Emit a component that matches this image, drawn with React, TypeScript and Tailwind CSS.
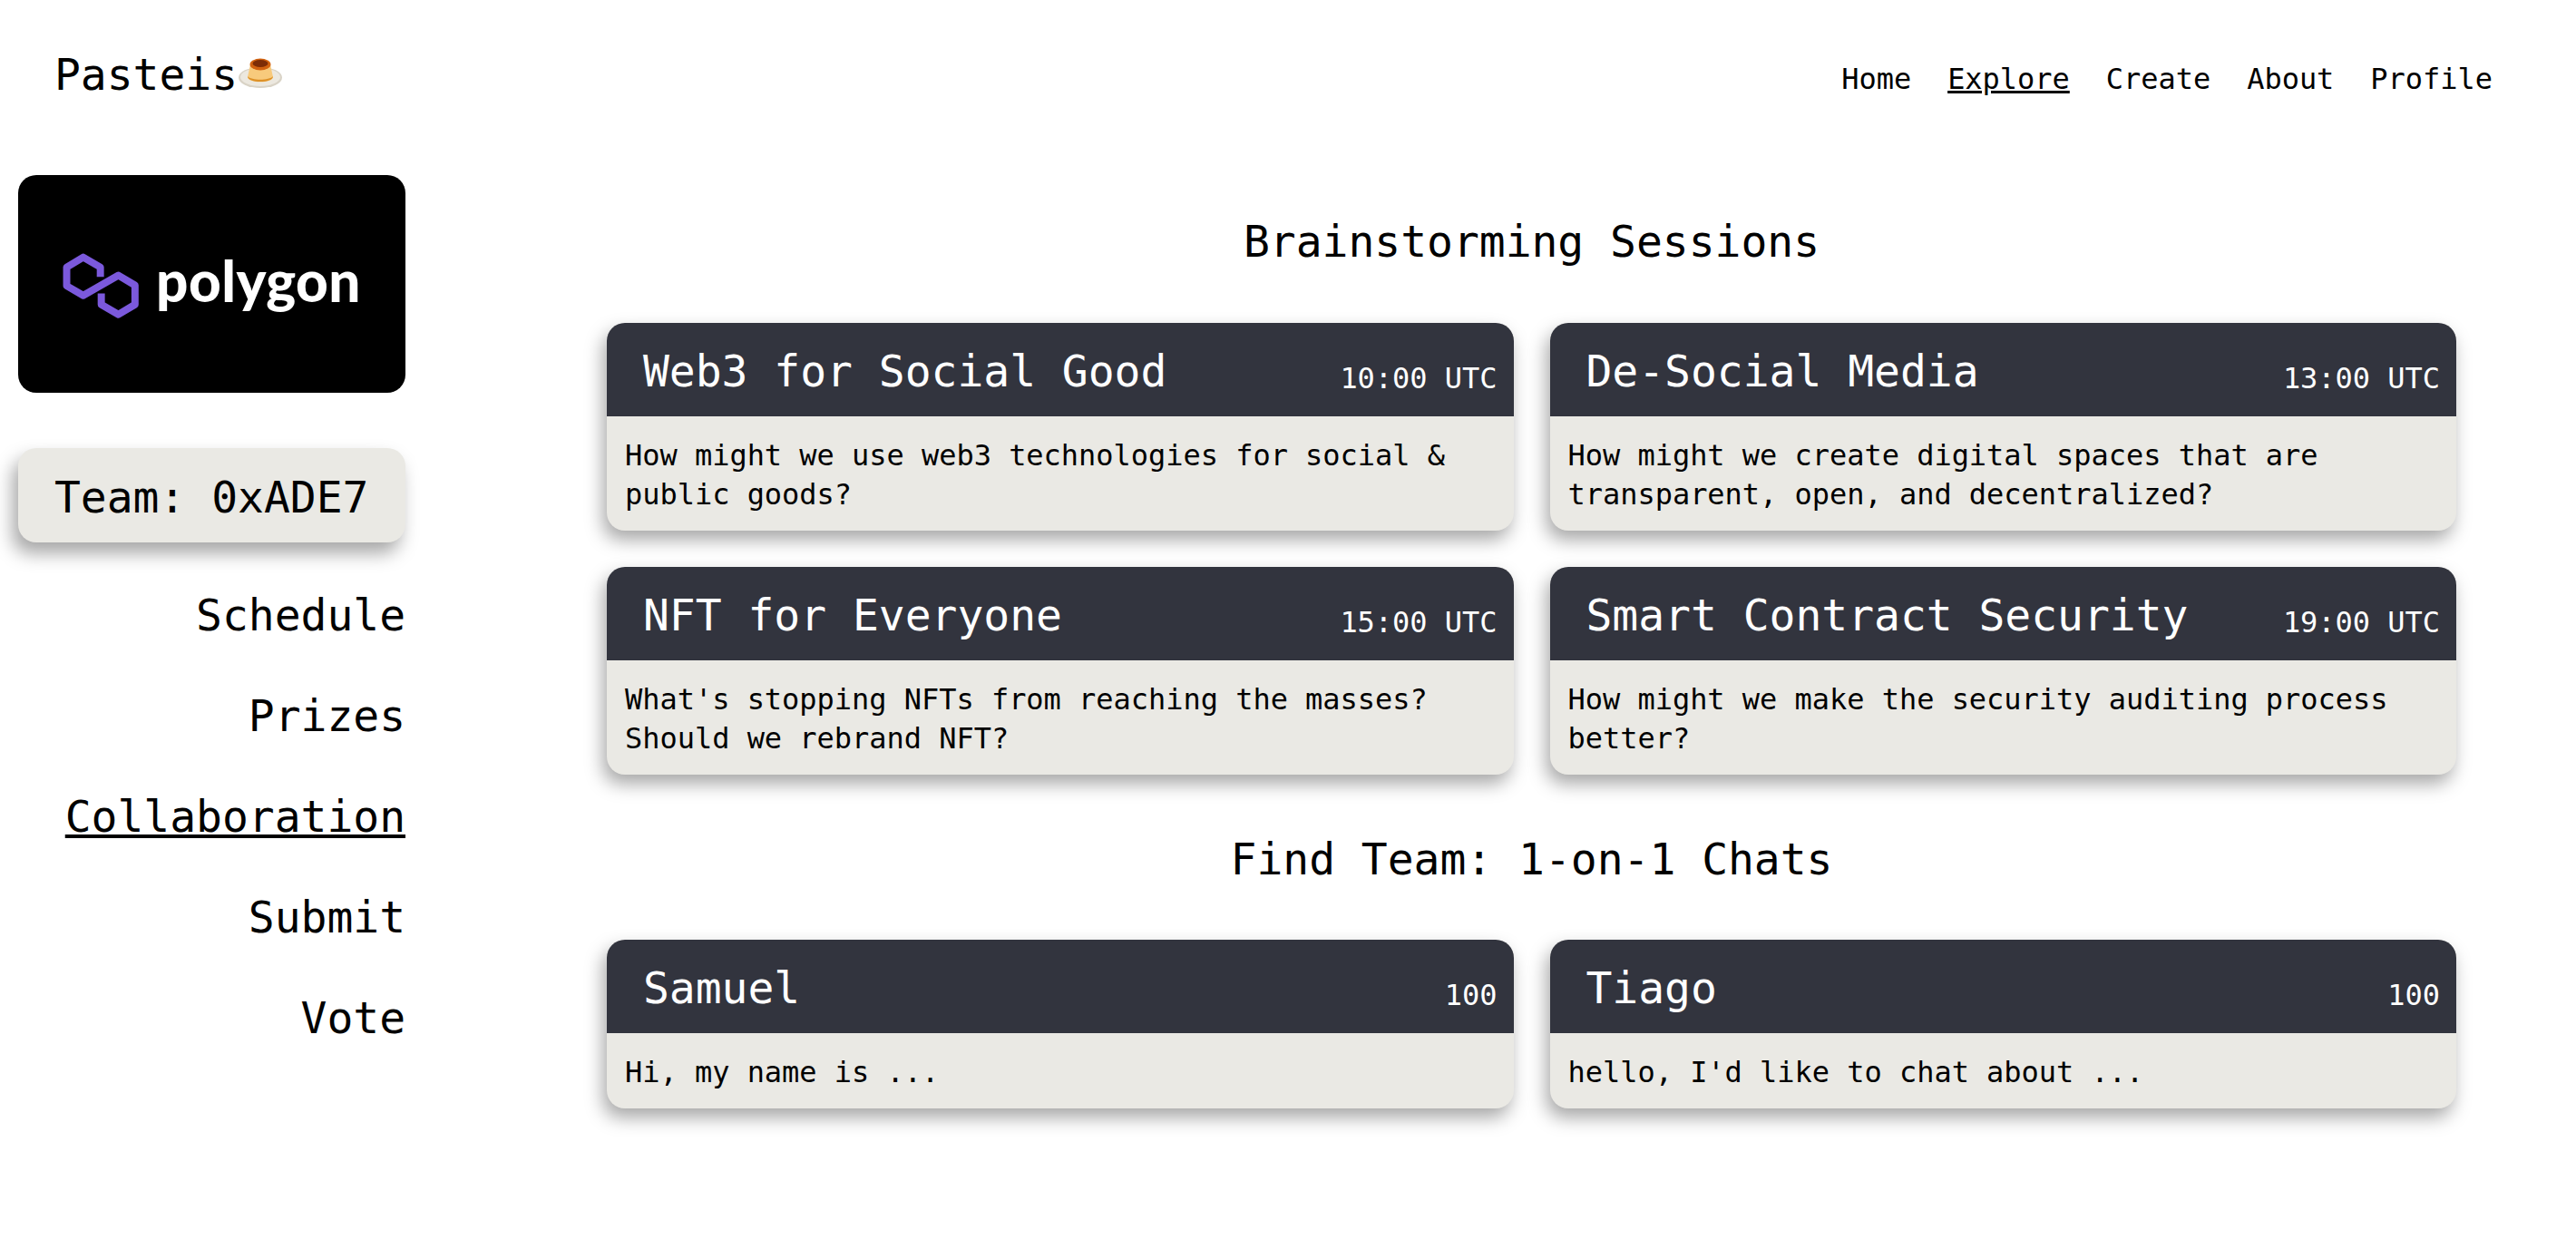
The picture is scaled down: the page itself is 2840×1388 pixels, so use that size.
const sessions = [
  { title: "Web3 for Social Good", meta: "10:00 UTC", body: "How might we use web3 technologies for social & public goods?" },
  { title: "De-Social Media", meta: "13:00 UTC", body: "How might we create digital spaces that are transparent, open, and decentralized?" },
  { title: "NFT for Everyone", meta: "15:00 UTC", body: "What's stopping NFTs from reaching the masses? Should we rebrand NFT?" },
  { title: "Smart Contract Security", meta: "19:00 UTC", body: "How might we make the security auditing process better?" },
];

const chats = [
  { title: "Samuel", meta: "100", body: "Hi, my name is ..." },
  { title: "Tiago", meta: "100", body: "hello, I'd like to chat about ..." },
];

const navLinks = ["Home", "Explore", "Create", "About", "Profile"];
const sideLinks = ["Schedule", "Prizes", "Collaboration", "Submit", "Vote"];

function Flan() {
  return (
    <svg width="48" height="33" viewBox="0 0 48 33" className="ml-[1px] mt-[18px] shrink-0">
      <ellipse cx="24" cy="21.5" rx="24" ry="11.5" fill="#d9d3c6" />
      <ellipse cx="24" cy="21" rx="22" ry="10" fill="#ece8df" />
      <path d="M13 7 L10 21 C10 28 38 28 38 21 L35 7 Z" fill="#f8ca7c" />
      <path d="M10 20 C10 28 38 28 38 20 C34 25 14 25 10 20 Z" fill="#dd9128" />
      <ellipse cx="24" cy="7" rx="11.5" ry="6.5" fill="#d2620f" />
      <ellipse cx="24" cy="6" rx="8.5" ry="4" fill="#7d2c06" />
    </svg>
  );
}

function PolygonLogo() {
  return (
    <div className="flex h-[240px] w-[427px] items-center justify-center gap-[18px] rounded-[20px] bg-black">
      <svg width="85" height="73" viewBox="90 78 255 220" className="mt-[2px]">
        <path
          d="M215 160 L215 128 L158 95 L103 128 L103 190 L158 222 L275 155 L330 188 L330 252 L275 285 L218 252 L218 215"
          fill="none"
          stroke="#7b59dc"
          strokeWidth="24"
          strokeLinejoin="round"
        />
      </svg>
      <span className="mb-[8px] font-['Lato',sans-serif] text-[62px] leading-none font-black tracking-[0.5px] text-white">
        polygon
      </span>
    </div>
  );
}

function Card({ title, meta, body }: { title: string; meta: string; body: string }) {
  return (
    <div className="overflow-hidden rounded-[20px] bg-[#eae9e4] shadow-[-4px_10px_20px_rgba(0,0,0,0.35)]">
      <div className="flex h-[103px] items-center justify-between bg-[#32343e] pr-[18px] pl-10 text-white">
        <span className="mt-[3px] text-[48px] leading-[72px]">{title}</span>
        <span className="mt-[18px] text-[32px] leading-[48px]">{meta}</span>
      </div>
      <p className="px-5 pt-[22px] pb-[18px] text-[32px] leading-[43px]">{body}</p>
    </div>
  );
}

export default function App() {
  return (
    <div className="min-h-screen bg-white font-['DejaVu_Sans_Mono',monospace] tracking-[-0.002em] text-black">
      <header className="flex h-[193px] items-start justify-between pt-[46px] pr-[92px] pl-[60px]">
        <div className="flex items-start">
          <span className="text-[48px] leading-[72px]">Pasteis</span>
          <Flan />
        </div>
        <nav className="mt-[17px] flex gap-10 text-[32px] leading-[48px]">
          {navLinks.map((link) => (
            <a key={link} className={link === "Explore" ? "underline" : ""}>
              {link}
            </a>
          ))}
        </nav>
      </header>

      <div className="flex">
        <aside className="ml-5 w-[427px] shrink-0">
          <PolygonLogo />
          <div className="mt-[61px] flex h-[104px] items-center rounded-[20px] bg-[#eae9e4] pt-[3px] pl-10 text-[48px] shadow-[-6px_12px_20px_rgba(0,0,0,0.35)]">
            Team: 0xADE7
          </div>
          <nav className="mt-[44px] flex flex-col gap-[39px] text-right text-[48px] leading-[72px]">
            {sideLinks.map((link) => (
              <a key={link} className={link === "Collaboration" ? "underline" : ""}>
                {link}
              </a>
            ))}
          </nav>
        </aside>

        <main className="mt-[37px] ml-[222px] w-[2039px]">
          <h2 className="mb-[54px] text-center text-[48px] leading-[72px]">Brainstorming Sessions</h2>
          <div className="grid grid-cols-2 gap-10">
            {sessions.map((s) => (
              <Card key={s.title} {...s} />
            ))}
          </div>
          <h2 className="mt-[57px] mb-[53px] text-center text-[48px] leading-[72px]">Find Team: 1-on-1 Chats</h2>
          <div className="grid grid-cols-2 gap-10">
            {chats.map((c) => (
              <Card key={c.title} {...c} />
            ))}
          </div>
        </main>
      </div>
    </div>
  );
}
